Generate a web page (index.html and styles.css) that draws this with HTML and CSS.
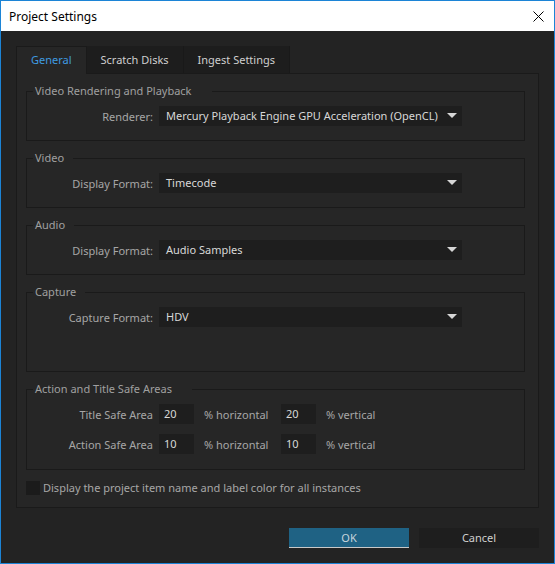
FILE: index.html
```html
<!DOCTYPE html>
<html lang="en">
<head>
  <meta charset="UTF-8">
  <title>Project Settings</title>
  <link rel="stylesheet" href="styles.css">
</head>
<body>
  <div class="window">
    <div class="titlebar">
      <span class="title">Project Settings</span>
      <svg class="close" width="11" height="11" viewBox="0 0 11 11"><path d="M0.5 0.5 L10.5 10.5 M10.5 0.5 L0.5 10.5" stroke="#000" stroke-width="1" fill="none"/></svg>
    </div>
    <div class="content">
      <div class="tabs">
        <div class="tab active">General</div>
        <div class="tab">Scratch Disks</div>
        <div class="tab">Ingest Settings</div>
      </div>
      <div class="panel">
        <div class="group">
          <div class="group-title wide">Video Rendering and Playback</div>
          <div class="row">
            <span class="label">Renderer:</span>
            <div class="select">Mercury Playback Engine GPU Acceleration (OpenCL)<span class="arrow"></span></div>
          </div>
        </div>
        <div class="group">
          <div class="group-title">Video</div>
          <div class="row">
            <span class="label">Display Format:</span>
            <div class="select">Timecode<span class="arrow"></span></div>
          </div>
        </div>
        <div class="group">
          <div class="group-title">Audio</div>
          <div class="row">
            <span class="label">Display Format:</span>
            <div class="select">Audio Samples<span class="arrow"></span></div>
          </div>
        </div>
        <div class="group capture">
          <div class="group-title">Capture</div>
          <div class="row">
            <span class="label">Capture Format:</span>
            <div class="select">HDV<span class="arrow"></span></div>
          </div>
        </div>
        <div class="group safe">
          <div class="group-title wide">Action and Title Safe Areas</div>
          <div class="row">
            <span class="label">Title Safe Area</span>
            <div class="field">20</div>
            <span class="unit">% horizontal</span>
            <div class="field">20</div>
            <span class="unit">% vertical</span>
          </div>
          <div class="row">
            <span class="label">Action Safe Area</span>
            <div class="field">10</div>
            <span class="unit">% horizontal</span>
            <div class="field">10</div>
            <span class="unit">% vertical</span>
          </div>
        </div>
        <div class="check-row">
          <span class="checkbox"></span>
          <span>Display the project item name and label color for all instances</span>
        </div>
      </div>
      <div class="buttons">
        <div class="btn primary">OK</div>
        <div class="btn">Cancel</div>
      </div>
    </div>
  </div>
</body>
</html>
```

FILE: styles.css
```css
body {
  margin: 0;
  font-family: 'Noto Sans', 'Open Sans', sans-serif;
  font-size: 11px;
  background: #232323;
  white-space: nowrap;
}
.window {
  width: 555px;
  height: 564px;
  box-sizing: border-box;
  border: 1px solid #1c84d6;
  background: #232323;
}
.titlebar {
  height: 30px;
  background: #fff;
  color: #000;
  display: flex;
  align-items: center;
  justify-content: space-between;
  padding: 0 10px 0 8px;
}
.title {
  font-size: 12px;
}
.content {
  padding: 15px 15px 0 15px;
}
.tabs {
  display: flex;
  height: 27px;
}
.tab {
  background: #1d1d1d;
  color: #cfcfcf;
  line-height: 27px;
  padding: 0 14px;
  border-right: 1px solid #191919;
  box-sizing: border-box;
}
.tab.active {
  background: #262626;
  color: #3f9be0;
  border: 1px solid #1a1a1a;
  border-bottom: none;
  line-height: 26px;
  height: 28px;
  margin-bottom: -1px;
  position: relative;
  z-index: 1;
}
.panel {
  background: #262626;
  border: 1px solid #1a1a1a;
  height: 435px;
  box-sizing: border-box;
  padding: 17px 13px 0 9px;
}
.group {
  border: 1px solid #1a1a1a;
  padding: 14px 0;
  margin-bottom: 17px;
}
.group-title {
  display: block;
  width: fit-content;
  color: #a0a0a0;
  background: #262626;
  line-height: 16px;
  height: 16px;
  margin: -23px 0 7px 6px;
  padding: 0 9px 0 2px;
}
.group-title.wide {
  padding-right: 20px;
}
.row {
  display: flex;
  align-items: center;
  height: 20px;
}
.label {
  width: 126px;
  text-align: right;
  color: #a6a6a6;
  margin-right: 6px;
}
.select {
  position: relative;
  width: 303px;
  height: 20px;
  line-height: 20px;
  background: #1e1e1e;
  color: #d8d8d8;
  padding-left: 7px;
  box-sizing: border-box;
}
.arrow {
  position: absolute;
  right: 5px;
  top: 7px;
  border-left: 5px solid transparent;
  border-right: 5px solid transparent;
  border-top: 5px solid #d6d6d6;
}
.capture {
  padding-bottom: 44px;
}
.safe .row + .row {
  margin-top: 10px;
}
.safe {
  padding-bottom: 15px;
  margin-bottom: 10px;
}
.field {
  width: 35px;
  height: 20px;
  line-height: 20px;
  background: #1e1e1e;
  color: #d8d8d8;
  padding-left: 5px;
  box-sizing: border-box;
}
.unit {
  color: #a6a6a6;
  width: 87px;
  padding-left: 10px;
  box-sizing: border-box;
}
.check-row {
  display: flex;
  align-items: center;
  color: #a6a6a6;
  gap: 3px;
}
.checkbox {
  width: 14px;
  height: 14px;
  background: #1b1b1b;
}
.buttons {
  display: flex;
  justify-content: flex-end;
  gap: 10px;
  margin-top: 20px;
}
.btn {
  width: 120px;
  height: 20px;
  line-height: 20px;
  text-align: center;
  background: #1e1e1e;
  color: #d0d0d0;
  box-sizing: border-box;
}
.btn.primary {
  background: #1f6284;
  color: #c8d4dc;
  border-bottom: 1px solid #c9c9c9;
  line-height: 19px;
}
```
